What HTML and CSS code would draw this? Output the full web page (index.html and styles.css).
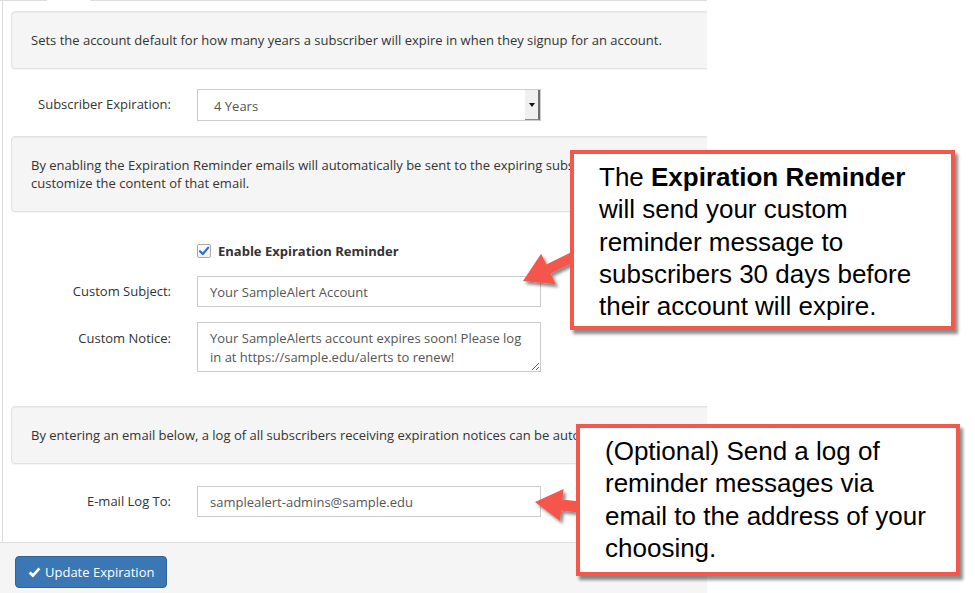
FILE: index.html
```html
<!DOCTYPE html>
<html lang="en">
<head>
    <meta charset="UTF-8">
    <title>Subscriber Expiration</title>
    <link rel="stylesheet" href="styles.css">
</head>
<body>
    <div class="screen">
        <div class="tabs">
            <span class="tabs-line tabs-first"></span>
            <span class="tab-active"></span>
            <span class="tabs-line tabs-rest"></span>
        </div>

        <div class="panel">
            <div class="well">Sets the account default for how many years a subscriber will expire in when they signup for an account.</div>

            <div class="form-row">
                <label class="control-label">Subscriber Expiration:</label>
                <div class="select">
                    <span class="select-value">4 Years</span>
                    <span class="select-btn"></span>
                </div>
            </div>

            <div class="well">By enabling the Expiration Reminder emails will automatically be sent to the expiring subscribers and you can<br>customize the content of that email.</div>

            <div class="check-row">
                <span class="checkbox">
                    <svg width="12" height="12" viewBox="0 0 12 12"><path d="M2 6.2 L4.8 9 L10.2 2.6" fill="none" stroke="#2d6fcf" stroke-width="2.2" stroke-linecap="round" stroke-linejoin="round"/></svg>
                </span>
                <span class="check-label">Enable Expiration Reminder</span>
            </div>

            <div class="form-row">
                <label class="control-label">Custom Subject:</label>
                <input class="form-control" type="text" value="Your SampleAlert Account">
            </div>

            <div class="form-row notice-row">
                <label class="control-label">Custom Notice:</label>
                <textarea class="form-control">Your SampleAlerts account expires soon! Please log in at https://sample.edu/alerts to renew!</textarea>
            </div>

            <div class="well">By entering an email below, a log of all subscribers receiving expiration notices can be automatically sent.</div>

            <div class="form-row email-row">
                <label class="control-label">E-mail Log To:</label>
                <input class="form-control" type="text" value="samplealert-admins@sample.edu">
            </div>
        </div>

        <div class="footer">
            <button class="btn-primary">
                <svg width="13" height="12" viewBox="0 0 13 12"><path d="M1.6 6.4 L4.9 9.6 L11.4 2.4" fill="none" stroke="#fff" stroke-width="2.8" stroke-linejoin="miter"/></svg>
                Update Expiration
            </button>
        </div>
    </div>

    <!-- annotation arrows -->
    <svg class="arrows" width="975" height="593" viewBox="0 0 975 593">
        <defs>
            <filter id="shadow" x="-20%" y="-20%" width="150%" height="150%">
                <feDropShadow dx="2.5" dy="3" stdDeviation="1.6" flood-color="#000" flood-opacity="0.45"/>
            </filter>
        </defs>
        <polygon filter="url(#shadow)" fill="#f4574b" points="523,281 541.1,253.8 546.3,264.5 577.9,249 582.3,258 550.7,273.5 555.9,284.2"/>
        <polygon filter="url(#shadow)" fill="#f4574b" points="535,502 563.6,489.1 562.4,499.5 584.2,502 583,512.9 561.2,510.5 560,520.9"/>
    </svg>

    <div class="callout callout-reminder">
        The <b>Expiration Reminder</b><br>
        will send your custom<br>
        reminder message to<br>
        subscribers 30 days before<br>
        their account will expire.
    </div>

    <div class="callout callout-log">
        (Optional) Send a log of<br>
        reminder messages via<br>
        email to the address of your<br>
        choosing.
    </div>
</body>
</html>
```

FILE: styles.css
```css
* {
    margin: 0;
    padding: 0;
    box-sizing: border-box;
}

body {
    font-family: 'Open Sans', 'Liberation Sans', sans-serif;
    font-size: 13px;
    color: #333;
    background-color: #fff;
    position: relative;
    width: 975px;
    height: 593px;
    overflow: hidden;
}

.screen {
    width: 707px;
    height: 593px;
    overflow: hidden;
    display: flex;
    flex-direction: column;
}

/* Tab strip at the top */
.tabs {
    display: flex;
    height: 1px;
    flex-shrink: 0;
}

.tabs-line {
    background-color: #ddd;
}

.tabs-first {
    width: 46px;
}

.tab-active {
    width: 45px;
    border-left: 1px solid #e6e6e6;
    border-right: 1px solid #e6e6e6;
}

.tabs-rest {
    flex: 1;
}

.panel {
    width: 800px;
    margin-left: 2px;
    border-left: 1px solid #ddd;
    padding: 10px 0 25px 8px;
    flex-shrink: 0;
}

.well {
    background-color: #f5f5f5;
    border: 1px solid #e3e3e3;
    border-radius: 4px;
    box-shadow: inset 0 1px 1px rgba(0, 0, 0, 0.05), 0 1px 0 rgba(0, 0, 0, 0.04);
    padding: 19px;
    margin-bottom: 20px;
    line-height: 18px;
}

/* Horizontal form rows */
.form-row {
    display: flex;
    align-items: flex-start;
    gap: 26px;
    margin-bottom: 15px;
}

.control-label {
    width: 160px;
    flex-shrink: 0;
    text-align: right;
    line-height: 31px;
}

.form-control {
    width: 344px;
    height: 31px;
    border: 1px solid #ccc;
    border-radius: 0;
    padding: 0 12px;
    font-family: 'Open Sans', 'Liberation Sans', sans-serif;
    font-size: 13px;
    color: #555;
    background-color: #fff;
}

.select {
    width: 344px;
    height: 32px;
    border: 1px solid #ccc;
    display: flex;
    align-items: center;
    justify-content: space-between;
    color: #555;
}

.select-value {
    padding-left: 16px;
    padding-top: 1px;
}

.select-btn {
    width: 15px;
    height: 30px;
    background-color: #f0f0f0;
    border-right: 2px solid #6f6f6f;
    border-bottom: 1px solid #8a8a8a;
    display: flex;
    align-items: center;
    justify-content: center;
}

.select-btn::after {
    content: "";
    border-left: 3px solid transparent;
    border-right: 3px solid transparent;
    border-top: 4px solid #111;
}

.check-row {
    display: flex;
    align-items: center;
    gap: 7px;
    height: 38px;
    padding-left: 186px;
    margin-bottom: 6px;
}

.checkbox {
    width: 14px;
    height: 14px;
    border: 1px solid #a9a9a9;
    border-radius: 2px;
    background: linear-gradient(#fff, #f0f0f0);
    display: flex;
    align-items: center;
    justify-content: center;
}

.check-label {
    font-weight: bold;
}

.notice-row {
    margin-bottom: 34px;
}

.notice-row .control-label {
    line-height: 18px;
    padding-top: 7px;
}

textarea.form-control {
    height: 50px;
    padding: 6px 12px;
    line-height: 19px;
    resize: both;
    overflow: hidden;
}

.email-row {
    margin-top: 22px;
    margin-bottom: 0;
}

/* Footer with the save button */
.footer {
    flex: 1;
    background-color: #f5f5f5;
    border-top: 1px solid #ddd;
    padding: 13px 0 0 15px;
}

.btn-primary {
    display: flex;
    align-items: center;
    gap: 4px;
    height: 32px;
    padding: 0 12px;
    background-color: #3a77b4;
    border: 1px solid #2e6497;
    border-radius: 4px;
    color: #fff;
    font-family: 'Open Sans', 'Liberation Sans', sans-serif;
    font-size: 13px;
    cursor: pointer;
}

/* Annotations drawn on top of the screenshot */
.arrows {
    position: absolute;
    top: 0;
    left: 0;
    z-index: 1;
}

.callout {
    position: absolute;
    z-index: 2;
    background-color: #fff;
    border: 4px solid #f4574b;
    box-shadow: 3px 4px 3px rgba(0, 0, 0, 0.45);
    font-family: 'Liberation Sans', Arial, sans-serif;
    font-size: 26px;
    line-height: 32.3px;
    color: #000;
    padding: 7px 0 0 25px;
}

.callout-reminder {
    left: 570px;
    top: 150px;
    width: 385px;
    height: 180px;
}

.callout-log {
    left: 576px;
    top: 424px;
    width: 384px;
    height: 152px;
}
```
